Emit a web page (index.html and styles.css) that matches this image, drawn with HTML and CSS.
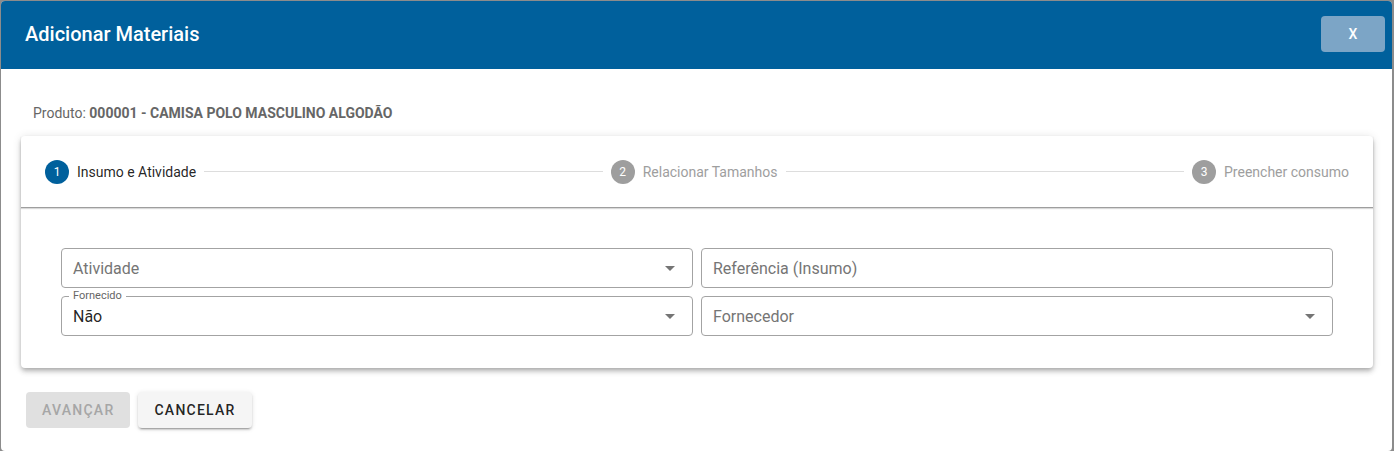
FILE: index.html
```html
<!DOCTYPE html>
<html>
	<head>
		<meta charset="UTF-8">
		<title>Adicionar Materiais</title>
		<link rel="stylesheet" href="styles.css">
	</head>
	<body>
		<div class="dialog">
			<div class="dialog-head">
				<h2>Adicionar Materiais</h2>
				<button class="btn-close">X</button>
			</div>
			<div class="dialog-body">
				<p class="produto">Produto: <b>000001 - CAMISA POLO MASCULINO ALGODÃO</b></p>
				<div class="card">
					<div class="stepper">
						<div class="step active"><span class="num">1</span><span class="txt">Insumo e Atividade</span></div>
						<div class="line"></div>
						<div class="step"><span class="num">2</span><span class="txt">Relacionar Tamanhos</span></div>
						<div class="line"></div>
						<div class="step"><span class="num">3</span><span class="txt">Preencher consumo</span></div>
					</div>
					<div class="form">
						<div class="field">
							<span class="placeholder">Atividade</span>
							<span class="arrow"></span>
						</div>
						<div class="field">
							<span class="placeholder">Referência (Insumo)</span>
						</div>
						<div class="field filled">
							<span class="legend">Fornecido</span>
							<span class="value">Não</span>
							<span class="arrow"></span>
						</div>
						<div class="field">
							<span class="placeholder">Fornecedor</span>
							<span class="arrow"></span>
						</div>
					</div>
				</div>
				<div class="actions">
					<button class="btn" disabled>Avançar</button>
					<button class="btn raised">Cancelar</button>
				</div>
			</div>
		</div>
	</body>
</html>
```
FILE: styles.css
```css
html, body{
	margin: 0;
	padding: 0;
	height: 100%;
}
body{
	background-color: #8c8c8c;
	font-family: Roboto, "Noto Sans", Arial, sans-serif;
	overflow: hidden;
}
.dialog{
	margin: 1px 2px 0 1px;
	height: 450px;
	background-color: #fff;
	border-radius: 4px;
	overflow: hidden;
}
.dialog-head{
	height: 68px;
	background-color: #00609c;
	display: flex;
	align-items: center;
	justify-content: space-between;
	padding: 0 7px 0 24px;
}
.dialog-head h2{
	margin: 0;
	color: #fff;
	font-size: 20px;
	font-weight: 500;
	margin-top: -3px;
}
.btn-close{
	width: 64px;
	height: 36px;
	border: none;
	border-radius: 4px;
	background-color: #7ca5c6;
	color: #fff;
	font-family: inherit;
	font-size: 14px;
	font-weight: 500;
	margin-top: -2px;
}
.dialog-body{
	padding: 0 19px 0 20px;
}
.produto{
	margin: 0;
	padding: 35px 0 0 12px;
	font-size: 14px;
	line-height: 18px;
	color: #666;
}
.produto b{
	font-weight: 700;
}
.card{
	margin-top: 14px;
	background-color: #fff;
	border-radius: 4px;
	box-shadow: 0 2px 4px -1px rgba(0,0,0,.2), 0 4px 5px 0 rgba(0,0,0,.14), 0 1px 10px 0 rgba(0,0,0,.12);
}
.stepper{
	height: 71px;
	display: flex;
	align-items: center;
	padding: 0 24px;
	border-bottom: 1px solid #9e9e9e;
	box-shadow: 0 1px 1px rgba(0,0,0,.15);
}
.step{
	display: flex;
	align-items: center;
	font-size: 14px;
	color: #9e9e9e;
}
.step .num{
	width: 24px;
	height: 24px;
	border-radius: 50%;
	background-color: #9e9e9e;
	color: #fff;
	font-size: 12px;
	display: flex;
	align-items: center;
	justify-content: center;
	margin-right: 8px;
}
.step.active{
	color: rgba(0,0,0,.87);
}
.step.active .num{
	background-color: #00609c;
}
.line{
	flex: 1;
	height: 1px;
	background-color: #ddd;
	margin: 0 8px;
}
.form{
	display: grid;
	grid-template-columns: 1fr 1fr;
	gap: 8px;
	padding: 40px 40px 32px;
}
.field{
	position: relative;
	height: 38px;
	border: 1px solid #a3a3a3;
	border-radius: 4px;
	display: flex;
	align-items: center;
	padding: 0 11px;
	font-size: 16px;
}
.placeholder{
	color: #757575;
}
.value{
	color: rgba(0,0,0,.87);
}
.arrow{
	margin-left: auto;
	margin-right: 6px;
	width: 0;
	height: 0;
	border-left: 5px solid transparent;
	border-right: 5px solid transparent;
	border-top: 5px solid #757575;
}
.legend{
	position: absolute;
	top: -8px;
	left: 7px;
	padding: 0 4px;
	background-color: #fff;
	font-size: 11px;
	line-height: 14px;
	color: #666;
}
.actions{
	display: flex;
	gap: 8px;
	padding: 24px 0 0 5px;
}
.btn{
	height: 36px;
	padding: 0 16px;
	border: none;
	border-radius: 4px;
	font-family: inherit;
	font-size: 14px;
	font-weight: 500;
	letter-spacing: 1.25px;
	text-transform: uppercase;
	background-color: #f5f5f5;
	color: rgba(0,0,0,.87);
}
.btn:disabled{
	background-color: #e0e0e0;
	color: #a6a6a6;
}
.btn.raised{
	box-shadow: 0 3px 1px -2px rgba(0,0,0,.2), 0 2px 2px 0 rgba(0,0,0,.14), 0 1px 5px 0 rgba(0,0,0,.12);
}
```
